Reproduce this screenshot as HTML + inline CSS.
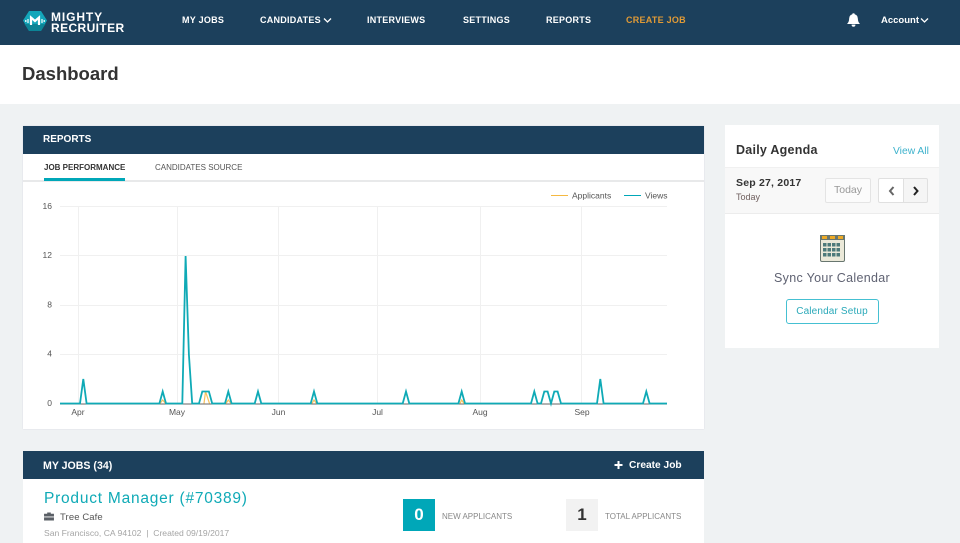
<!DOCTYPE html>
<html><head><meta charset="utf-8"><title>Dashboard</title>
<style>
html,body{margin:0;padding:0}
body{width:960px;height:543px;overflow:hidden;background:#eff2f3;position:relative;font-family:"Liberation Sans",sans-serif}
.a{position:absolute;white-space:nowrap;line-height:1}
.b{position:absolute}
.n{color:#fff;font-size:9px;font-weight:bold;top:16px;letter-spacing:.25px}
</style></head><body>
<div class="b" style="left:0;top:0;width:960px;height:45px;background:#1c405c"></div>
<svg class="b" style="left:23px;top:11px" width="24" height="20" viewBox="0 0 24 20"><polygon points="6,0 18,0 24,9.500 18,20 6,20 0,9.500" fill="#13a6ba"/><polygon points="1.500,13 22.500,13 18,20 6,20" fill="#0c8496"/><path d="M8 14V6.500l4 3.500 4-3.500V14" fill="none" stroke="#fff" stroke-width="2.200"/><path d="M5 8v4M19 8v4M2.800 9v2M21.200 9v2" stroke="#fff" stroke-width="1.200"/></svg>
<div class="a" style="left:51px;top:11px;color:#fff;font-size:12px;font-weight:bold;letter-spacing:.9px">MIGHTY</div>
<div class="a" style="left:51px;top:21.500px;color:#fff;font-size:12px;font-weight:bold;letter-spacing:.4px">RECRUITER</div>
<div class="a n" style="left:182px">MY JOBS</div>
<div class="a n" style="left:260px">CANDIDATES</div>
<svg class="b" style="left:323px;top:17px" width="9" height="7"><path d="M1 1.500l3.500 3.500L8 1.500" fill="none" stroke="#fff" stroke-width="1.300"/></svg>
<div class="a n" style="left:367px">INTERVIEWS</div>
<div class="a n" style="left:463px">SETTINGS</div>
<div class="a n" style="left:546px">REPORTS</div>
<div class="a n" style="left:626px;color:#e09a36">CREATE JOB</div>
<svg class="b" style="left:847px;top:13px" width="13" height="14" viewBox="0 0 12 13"><path d="M6 0.500c.6 0 1 .4 1 1 2 .4 2.800 2 2.800 4 0 2.500.8 3.500 1.700 4.500H.5c.9-1 1.700-2 1.700-4.500 0-2 .8-3.600 2.800-4 0-.6.4-1 1-1zM4.500 11h3c0 1-.7 1.500-1.500 1.500S4.500 12 4.500 11z" fill="#fff" stroke="#fff" stroke-width=".5"/></svg>
<div class="a" style="left:881px;top:15.500px;color:#fff;font-size:9.500px;font-weight:bold">Account</div>
<svg class="b" style="left:920px;top:17px" width="9" height="7"><path d="M1 1.500l3.500 3.500L8 1.500" fill="none" stroke="#fff" stroke-width="1.300"/></svg>

<div class="b" style="left:0;top:45px;width:960px;height:59px;background:#fff"></div>
<div class="a" style="left:22px;top:65px;color:#333;font-size:18.500px;font-weight:bold">Dashboard</div>

<div class="b" style="left:23px;top:126px;width:681px;height:303px;background:#fff;box-shadow:0 0 1px #ccd"></div>
<div class="b" style="left:23px;top:126px;width:681px;height:28px;background:#1c405c"></div>
<div class="a" style="left:43px;top:135px;color:#fff;font-size:10px;font-weight:bold">REPORTS</div>
<div class="a" style="left:44px;top:164px;color:#333;font-size:8px;font-weight:bold">JOB PERFORMANCE</div>
<div class="a" style="left:155px;top:164px;color:#555;font-size:8px">CANDIDATES SOURCE</div>
<div class="b" style="left:23px;top:180px;width:681px;height:2px;background:#e8e9ea"></div>
<div class="b" style="left:44px;top:178px;width:81px;height:3px;background:#00a7b8"></div>
<div class="b" style="left:551px;top:195px;width:17px;height:1px;background:#f5b942"></div>
<div class="b" style="left:624px;top:195px;width:17px;height:1px;background:#00a7b8"></div>

<svg class="b" style="left:23px;top:182px" width="681" height="247" font-family="Liberation Sans, sans-serif">
<g transform="translate(-23 -182)">
<path d="M60 206.500H667M60 255.500H667M60 305.500H667M60 354.500H667M78.500 206V404M177.500 206V404M278.500 206V404M377.500 206V404M480.500 206V404M581.500 206V404" stroke="#f0f0f0" stroke-width="1" fill="none"/>
<path d="M60 404H667" stroke="#666" stroke-width="1" fill="none"/>
<path d="M204 403.500L205.500 391.500L209.500 403.500M160 403.500L162.700 400L165.500 403.500M226 403.500L228.300 400L231 403.500M312 403.500L314 400L316.500 403.500M460 403.500L461.700 400L464 403.500" stroke="#f8c25c" stroke-width="1.200" fill="none"/>
<path d="M60 403.500H80L83.300 379L86.600 403.500H159.400L162.700 391.500L166 403.500H182.300L185.600 256L188.900 354.500L192.200 403.500H199L202.300 391.500H208.900L212.200 403.500H225L228.300 391.500L231.600 403.500H254.700L258 391.500L261.300 403.500H310.700L314 391.500L317.300 403.500H402.700L406 391.500L409.300 403.500H458.400L461.700 391.500L465 403.500H531L534.300 391.500L537.600 403.500H541L544.300 391.500H547.600L551 403.500L554.300 391.500H557.600L561 403.500H597L600.300 379L603.600 403.500H643L646.300 391.500L649.600 403.500H667" stroke="#0faab6" stroke-width="1.800" fill="none" stroke-linejoin="miter"/>
<g font-size="8.500" fill="#555"><text x="572" y="198.500">Applicants</text><text x="645" y="198.500">Views</text>
<text x="52" y="209" text-anchor="end">16</text><text x="52" y="258" text-anchor="end">12</text><text x="52" y="307.500" text-anchor="end">8</text><text x="52" y="356.500" text-anchor="end">4</text><text x="52" y="406" text-anchor="end">0</text>
<text x="78" y="415" text-anchor="middle">Apr</text><text x="177" y="415" text-anchor="middle">May</text><text x="278.500" y="415" text-anchor="middle">Jun</text><text x="377.500" y="415" text-anchor="middle">Jul</text><text x="480" y="415" text-anchor="middle">Aug</text><text x="582" y="415" text-anchor="middle">Sep</text></g>
</g></svg>

<div class="b" style="left:725px;top:125px;width:214px;height:223px;background:#fff"></div>
<div class="a" style="left:736px;top:144px;color:#333;font-size:12.500px;font-weight:bold;letter-spacing:.25px">Daily Agenda</div>
<div class="a" style="left:893px;top:147px;color:#3db2cc;font-size:10.300px">View All</div>
<div class="b" style="left:725px;top:167px;width:214px;height:47px;background:#f8f8f8;border-top:1px solid #f0f0f0;border-bottom:1px solid #ececec;box-sizing:border-box"></div>
<div class="a" style="left:736px;top:178px;color:#333;font-size:10.500px;font-weight:bold;letter-spacing:.2px">Sep 27, 2017</div>
<div class="a" style="left:736px;top:193px;color:#70605f;font-size:9px">Today</div>
<div class="b" style="left:825px;top:178px;width:46px;height:25px;box-sizing:border-box;border:1px solid #e4e4e4;border-radius:2px;background:#fbfbfb"></div>
<div class="a" style="left:834px;top:185px;color:#999;font-size:10.500px">Today</div>
<div class="b" style="left:878px;top:178px;width:26px;height:25px;box-sizing:border-box;border:1px solid #e0e0e0;border-radius:2px 0 0 2px;background:#fff"></div>
<div class="b" style="left:903px;top:178px;width:25px;height:25px;box-sizing:border-box;border:1px solid #e0e0e0;border-radius:0 2px 2px 0;background:#f5f5f5"></div>
<svg class="b" style="left:888px;top:186px" width="8" height="10"><path d="M5.500 1L2 5l3.500 4" fill="none" stroke="#666" stroke-width="2"/></svg>
<svg class="b" style="left:912px;top:186px" width="8" height="10"><path d="M2 1l3.500 4L2 9" fill="none" stroke="#222" stroke-width="2"/></svg>

<svg class="b" style="left:820px;top:235px" width="25" height="27" viewBox="0 0 25 27"><rect x=".5" y=".5" width="24" height="26" rx="1.500" fill="#ebe9d9" stroke="#68766f"/><rect x="0" y="0" width="25" height="5" fill="#68766f"/><path d="M2 1h5v3H2zM10 1h5v3h-5zM18 1h5v3h-5z" fill="#eda925"/><g fill="#4d7a7a"><rect x="3" y="8" width="3.500" height="3.500"/><rect x="7.500" y="8" width="3.500" height="3.500"/><rect x="12" y="8" width="3.500" height="3.500"/><rect x="16.500" y="8" width="3.500" height="3.500"/><rect x="3" y="13" width="3.500" height="3.500"/><rect x="7.500" y="13" width="3.500" height="3.500"/><rect x="12" y="13" width="3.500" height="3.500"/><rect x="16.500" y="13" width="3.500" height="3.500"/><rect x="3" y="18" width="3.500" height="3.500"/><rect x="7.500" y="18" width="3.500" height="3.500"/><rect x="12" y="18" width="3.500" height="3.500"/><rect x="16.500" y="18" width="3.500" height="3.500"/></g></svg>
<div class="a" style="left:725px;width:214px;text-align:center;top:272px;color:#5f6272;font-size:12.500px;letter-spacing:.3px">Sync Your Calendar</div>
<div class="b" style="left:786px;top:299px;width:93px;height:25px;box-sizing:border-box;border:1px solid #45c0d2;border-radius:3px;background:#fff"></div>
<div class="a" style="left:786px;width:92px;text-align:center;top:306.500px;color:#2aa9b9;font-size:10px;letter-spacing:.15px">Calendar Setup</div>

<div class="b" style="left:23px;top:451px;width:681px;height:92px;background:#fff"></div>
<div class="b" style="left:23px;top:451px;width:681px;height:28px;background:#1c405c"></div>
<div class="a" style="left:43px;top:460.500px;color:#fff;font-size:10.600px;font-weight:bold">MY JOBS (34)</div>
<svg class="b" style="left:614px;top:460px" width="10" height="10"><path d="M4.500 1v8M.5 5h8" stroke="#fff" stroke-width="2"/></svg>
<div class="a" style="left:629px;top:460.500px;color:#fff;font-size:10.200px;font-weight:bold">Create Job</div>
<div class="a" style="left:44px;top:491px;color:#0faab6;font-size:15.500px;letter-spacing:.77px">Product Manager (#70389)</div>
<svg class="b" style="left:43px;top:512px" width="12" height="9" viewBox="0 0 12 10"><path d="M4 2V.5h4V2h3.500v7.500H.5V2z" fill="#5a5f66"/><path d="M.5 5.500h11" stroke="#fff"/></svg>
<div class="a" style="left:60px;top:512.500px;color:#555;font-size:9.500px;letter-spacing:.1px">Tree Cafe</div>
<div class="a" style="left:44px;top:529px;color:#a5a5a5;font-size:8.600px">San Francisco, CA 94102 &nbsp;|&nbsp; Created 09/19/2017</div>
<div class="b" style="left:403px;top:499px;width:32px;height:32px;background:#00a7b8"></div>
<div class="a" style="left:403px;width:32px;text-align:center;top:506px;color:#fff;font-size:17px;font-weight:bold">0</div>
<div class="a" style="left:442px;top:513px;color:#888;font-size:8px">NEW APPLICANTS</div>
<div class="b" style="left:566px;top:499px;width:32px;height:32px;background:#f2f2f2"></div>
<div class="a" style="left:566px;width:32px;text-align:center;top:506px;color:#333;font-size:17px;font-weight:bold">1</div>
<div class="a" style="left:605px;top:513px;color:#888;font-size:8px">TOTAL APPLICANTS</div>
</body></html>
